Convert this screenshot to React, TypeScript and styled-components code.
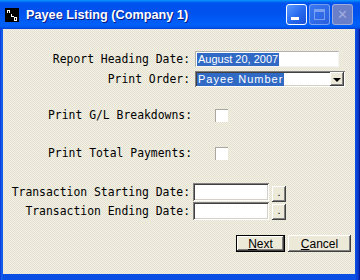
import styled, { createGlobalStyle } from 'styled-components';

const GlobalStyle = createGlobalStyle`
  html, body {
    margin: 0;
    padding: 0;
    background: #ffffff;
  }
  * {
    box-sizing: border-box;
  }
`;

const labelFont = `'DejaVu Sans Mono', 'Liberation Mono', monospace`;
const uiFont = `'Liberation Sans', Arial, sans-serif`;

const raised = `
  box-shadow: inset -1px -1px 0 #404040, inset 1px 1px 0 #ffffff,
    inset -2px -2px 0 #808080, inset 2px 2px 0 #ece9d8;
`;

const sunken = `
  box-shadow: inset 1px 1px 0 #808080, inset -1px -1px 0 #ffffff,
    inset 2px 2px 0 #404040, inset -2px -2px 0 #d4d0c8;
`;

function TitleIcon() {
  return (
    <svg width="14" height="14" viewBox="0 0 14 14">
      <rect x="0" y="0" width="14" height="14" fill="#000" />
      <rect x="2" y="2" width="3" height="1" fill="#fff" />
      <rect x="2" y="3" width="1" height="2" fill="#fff" />
      <rect x="4" y="3" width="1" height="2" fill="#fff" />
      <rect x="6" y="6" width="1" height="3" fill="#fff" />
      <rect x="6" y="8" width="3" height="1" fill="#fff" />
      <rect x="9" y="9" width="3" height="1" fill="#fff" />
      <rect x="9" y="10" width="1" height="2" fill="#fff" />
      <rect x="11" y="10" width="1" height="2" fill="#fff" />
      <rect x="9" y="12" width="3" height="1" fill="#fff" />
    </svg>
  );
}

function App() {
  return (
    <>
      <GlobalStyle />
      <Window>
        <TitleBar>
          <TitleIcon />
          <Title>Payee Listing (Company 1)</Title>
          <Controls>
            <CaptionButton aria-label="Minimize">
              <MinBar />
            </CaptionButton>
            <CaptionButton $disabled aria-label="Maximize">
              <MaxBox />
            </CaptionButton>
            <CaptionButton $disabled $close aria-label="Close">
              <CloseX>✕</CloseX>
            </CaptionButton>
          </Controls>
        </TitleBar>
        <Body>
          <Row $mt={22} $h={16} $label={187} $gap={5}>
            <Label>Report Heading Date:</Label>
            <TextField $w={144}>
              <Selected>August 20, 2007</Selected>
            </TextField>
          </Row>
          <Row $mt={4} $h={16} $label={187} $gap={5}>
            <Label>Print Order:</Label>
            <Select>
              <Selected $spaced>Payee Number</Selected>
              <DropButton>
                <Arrow />
              </DropButton>
            </Select>
          </Row>
          <Row $mt={22} $h={13} $label={189} $gap={23}>
            <Label>Print G/L Breakdowns:</Label>
            <CheckBox />
          </Row>
          <Row $mt={25} $h={13} $label={189} $gap={23}>
            <Label>Print Total Payments:</Label>
            <CheckBox />
          </Row>
          <Row $mt={23} $h={19} $label={187} $gap={3}>
            <Label>Transaction Starting Date:</Label>
            <DateField />
            <PickButton>.</PickButton>
          </Row>
          <Row $mt={0} $h={18} $label={187} $gap={3}>
            <Label>Transaction Ending Date:</Label>
            <DateField />
            <PickButton>.</PickButton>
          </Row>
          <ButtonBar>
            <PushButton $default $w={49}>
              <u>N</u>ext
            </PushButton>
            <PushButton $w={63}>
              <u>C</u>ancel
            </PushButton>
          </ButtonBar>
        </Body>
      </Window>
    </>
  );
}

const Window = styled.div`
  width: 360px;
  height: 280px;
  display: flex;
  flex-direction: column;
  background: linear-gradient(to right, #0831d9 0, #166aee 2px, #0a4ee4 3px, #0a4ee4 355px, #0b3cd0 358px, #00138c 360px);
  overflow: hidden;
`;

const TitleBar = styled.div`
  height: 29px;
  flex: none;
  display: flex;
  align-items: center;
  padding: 0 7px 0 5px;
  background: linear-gradient(
    to bottom,
    #0997ff 0%,
    #0053ee 10%,
    #0050ee 40%,
    #0060f8 85%,
    #0058ee 94%,
    #003dd7 100%
  );
`;

const Title = styled.span`
  margin-left: 7px;
  font-family: ${uiFont};
  font-weight: bold;
  font-size: 12.7px;
  color: #ffffff;
  text-shadow: 1px 1px 0 #0a1883;
  white-space: nowrap;
`;

const Controls = styled.div`
  margin-left: auto;
  display: flex;
  gap: 2px;
`;

const CaptionButton = styled.div<{ $disabled?: boolean; $close?: boolean }>`
  position: relative;
  width: 21px;
  height: 21px;
  border-radius: 3px;
  border: 1px solid ${(p) => (p.$disabled ? 'rgba(255,255,255,0.35)' : '#ffffff')};
  background: ${(p) =>
    p.$close
      ? '#6b7fc8'
      : p.$disabled
        ? 'linear-gradient(135deg, #3a78f0, #2a5fe0)'
        : 'linear-gradient(135deg, #5c9bff 0%, #2a6cf0 50%, #1a50d8 100%)'};
`;

const MinBar = styled.div`
  position: absolute;
  left: 4px;
  bottom: 4px;
  width: 8px;
  height: 3px;
  background: #ffffff;
`;

const MaxBox = styled.div`
  position: absolute;
  left: 4px;
  top: 4px;
  width: 11px;
  height: 11px;
  border: 1px solid rgba(255, 255, 255, 0.35);
  border-top-width: 3px;
`;

const CloseX = styled.span`
  position: absolute;
  inset: 0;
  display: flex;
  align-items: center;
  justify-content: center;
  font-family: 'DejaVu Sans', sans-serif;
  font-size: 13px;
  font-weight: bold;
  color: rgba(200, 205, 235, 0.6);
`;

const Body = styled.div`
  flex: 1;
  margin: 0 5px 6px 3px;
  display: flex;
  flex-direction: column;
  background-color: #ece9d8;
  background-image: conic-gradient(#f3f1e6 25%, #e4e1d0 0 50%, #f3f1e6 0 75%, #e4e1d0 0);
  background-size: 2px 2px;
`;

const Row = styled.div<{ $mt: number; $h: number; $label: number; $gap: number }>`
  margin-top: ${(p) => p.$mt}px;
  height: ${(p) => p.$h}px;
  display: grid;
  grid-template-columns: ${(p) => p.$label}px auto auto;
  column-gap: ${(p) => p.$gap}px;
  align-items: start;
  justify-content: start;
`;

const Label = styled.span`
  align-self: center;
  text-align: right;
  font-family: ${labelFont};
  font-size: 11.4px;
  line-height: 13px;
  color: #000000;
  white-space: nowrap;
`;

const TextField = styled.div<{ $w: number }>`
  width: ${(p) => p.$w}px;
  height: 16px;
  padding: 1px;
  background: #ffffff;
  border-top: 1px solid #b0b0b0;
  border-left: 1px solid #b0b0b0;
  border-right: 1px solid #f4f4f4;
  border-bottom: 1px solid #f4f4f4;
  display: flex;
  align-items: center;
`;

const Selected = styled.span<{ $spaced?: boolean }>`
  height: 13px;
  display: flex;
  align-items: center;
  padding: 0 1px;
  background: #316ac5;
  color: #ffffff;
  font-family: ${uiFont};
  font-size: 11px;
  letter-spacing: ${(p) => (p.$spaced ? '1px' : '0')};
  white-space: nowrap;
`;

const Select = styled.div`
  width: 150px;
  height: 16px;
  padding: 2px 2px 2px 2px;
  background: #ffffff;
  ${sunken}
  display: flex;
  align-items: center;
  justify-content: space-between;
`;

const DropButton = styled.div`
  width: 14px;
  height: 14px;
  margin-right: -1px;
  background: #ece9d8;
  ${raised}
  display: flex;
  align-items: center;
  justify-content: center;
`;

const Arrow = styled.div`
  width: 0;
  height: 0;
  border-left: 4px solid transparent;
  border-right: 4px solid transparent;
  border-top: 4px solid #000000;
  margin-top: 2px;
`;

const CheckBox = styled.div`
  width: 13px;
  height: 13px;
  background: #ffffff;
  box-shadow: inset 1px 1px 0 #a8a8a0, inset -1px -1px 0 #ffffff;
`;

const DateField = styled.div`
  width: 76px;
  height: 18px;
  background: #ffffff;
  ${sunken}
`;

const PickButton = styled.div`
  align-self: end;
  width: 14px;
  height: 16px;
  background: #ece9d8;
  ${raised}
  font-family: ${uiFont};
  font-size: 11px;
  line-height: 12px;
  text-align: center;
  color: #000000;
`;

const ButtonBar = styled.div`
  margin-top: 15px;
  padding-right: 4px;
  display: flex;
  justify-content: flex-end;
  gap: 3px;
`;

const PushButton = styled.div<{ $default?: boolean; $w: number }>`
  width: ${(p) => p.$w}px;
  height: 17px;
  display: flex;
  align-items: center;
  justify-content: center;
  background: #ece9d8;
  font-family: ${uiFont};
  font-size: 12px;
  color: #000000;
  border: ${(p) => (p.$default ? '1px solid #000000' : 'none')};
  ${raised}
  u {
    text-decoration: underline;
  }
`;

export default App;
